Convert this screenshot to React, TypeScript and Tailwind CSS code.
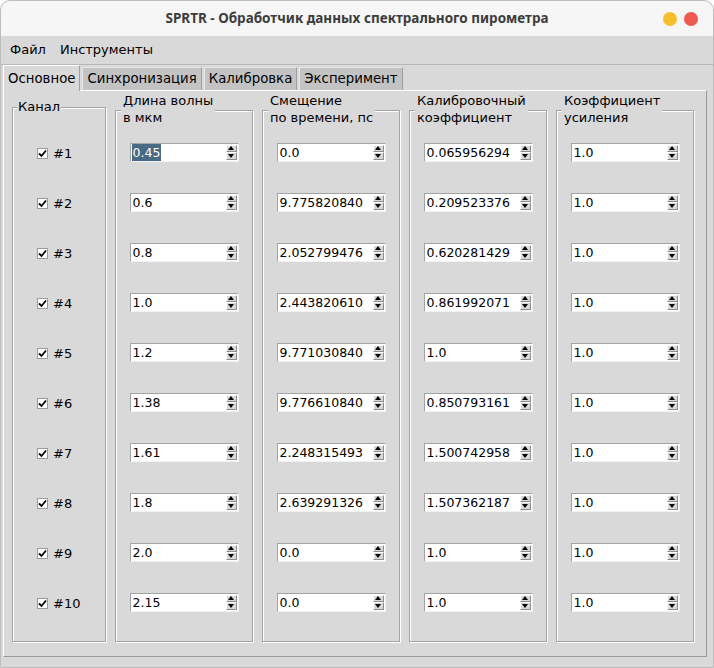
import React from 'react'

const channels = ['#1', '#2', '#3', '#4', '#5', '#6', '#7', '#8', '#9', '#10']

const columns = [
  {
    label: ['Длина волны', 'в мкм'],
    values: ['0.45', '0.6', '0.8', '1.0', '1.2', '1.38', '1.61', '1.8', '2.0', '2.15'],
  },
  {
    label: ['Смещение', 'по времени, пс'],
    values: ['0.0', '9.775820840', '2.052799476', '2.443820610', '9.771030840', '9.776610840', '2.248315493', '2.639291326', '0.0', '0.0'],
  },
  {
    label: ['Калибровочный', 'коэффициент'],
    values: ['0.065956294', '0.209523376', '0.620281429', '0.861992071', '1.0', '0.850793161', '1.500742958', '1.507362187', '1.0', '1.0'],
  },
  {
    label: ['Коэффициент', 'усиления'],
    values: ['1.0', '1.0', '1.0', '1.0', '1.0', '1.0', '1.0', '1.0', '1.0', '1.0'],
  },
]

const tabs = ['Основное', 'Синхронизация', 'Калибровка', 'Эксперимент']

const ArrowButton = ({ up }: { up?: boolean }) => (
  <div className="flex flex-1 items-center justify-center border-t border-l border-t-white border-l-white border-r border-b border-r-[#8c8c8c] border-b-[#8c8c8c] bg-[#d9d9d9]">
    <svg width="6" height="4" viewBox="0 0 6 4">
      {up ? <path d="M0 4 L3 0 L6 4 Z" fill="#000" /> : <path d="M0 0 L6 0 L3 4 Z" fill="#000" />}
    </svg>
  </div>
)

const Spinbox = ({ value, selected }: { value: string; selected?: boolean }) => (
  <div className="flex h-[19px] w-[109px] border-t border-l border-[#a3a3a3] border-r border-b border-r-[#f2f2f2] border-b-[#f2f2f2] bg-white">
    <div className="flex flex-1 items-center overflow-hidden whitespace-nowrap pl-[1px] text-[12.5px] leading-[17px] text-black">
      {selected ? <span className="bg-[#4a6984] px-[1px] text-white">{value}</span> : <span className="px-[1px]">{value}</span>}
    </div>
    <div className="flex w-[12px] flex-col py-[1px] pr-[1px]">
      <ArrowButton up />
      <ArrowButton />
    </div>
  </div>
)

const Checkbox = () => (
  <div className="flex h-[11px] w-[11px] items-center justify-center border border-[#9a9a9a] bg-white">
    <svg width="9" height="9" viewBox="0 0 9 9">
      <path d="M1 4.5 L3.5 7 L8 1.5" fill="none" stroke="#000" strokeWidth="1.8" />
    </svg>
  </div>
)

const groove = 'border border-[#a3a3a3] shadow-[inset_1px_1px_0_#fff,1px_1px_0_#fff]'

export default function App() {
  return (
    <div className="h-[668px] w-[714px] bg-white font-['DejaVu_Sans',sans-serif] text-[13px] text-black">
      <div className="flex h-full flex-col overflow-hidden rounded-t-[10px] border border-[#bdbdbd] bg-[#d9d9d9]">
        {/* title bar */}
        <div className="relative flex h-[35px] items-center justify-center bg-[#f6f6f6]">
          <span className="font-['Noto_Sans',sans-serif] text-[13.5px] font-bold text-[#3c3c3c]">
            SPRTR - Обработчик данных спектрального пирометра
          </span>
          <div className="absolute right-[15px] top-[11px] flex gap-[7px]">
            <div className="h-[14px] w-[14px] rounded-full bg-[#f4bf2a]" />
            <div className="h-[14px] w-[14px] rounded-full bg-[#ed5a52]" />
          </div>
        </div>

        {/* menu */}
        <div className="flex h-[29px] items-center gap-[14px] border-b border-[#b8b8b8] pl-[9px]">
          <span>Файл</span>
          <span>Инструменты</span>
        </div>

        {/* tabs */}
        <div className="flex h-[25px] items-end gap-[2px] pl-[2px] text-[13.3px]">
          {tabs.map((t, i) =>
            i === 0 ? (
              <div
                key={t}
                className="relative z-10 -mb-[1px] flex h-[26px] items-center border-t border-l border-white border-r border-r-[#9e9e9e] bg-[#d9d9d9] px-[4px]"
              >
                {t}
              </div>
            ) : (
              <div
                key={t}
                className="flex h-[23px] items-center border-t border-l border-[#e6e6e6] border-r border-r-[#9e9e9e] bg-[#c3c3c3] px-[4px]"
              >
                {t}
              </div>
            )
          )}
        </div>

        {/* notebook pane */}
        <div className="ml-[2px] mr-[6px] h-[567px] border-t border-l border-white border-r border-b border-r-[#9a9a9a] border-b-[#9a9a9a] pl-[8px] pt-[1px]">
          <div className="flex h-[550px] gap-[9px]">
            {/* channel */}
            <div className="relative flex w-[94px] flex-col pt-[15px]">
              <div className="absolute left-[5px] top-[6px] z-10 bg-[#d9d9d9] px-[1px] leading-[17px]">Канал</div>
              <div className={`flex-1 pt-[20px] pl-[24px] ${groove}`}>
                {channels.map((c) => (
                  <div key={c} className="flex h-[50px] items-center gap-[5px]">
                    <Checkbox />
                    <span className="leading-[17px]">{c}</span>
                  </div>
                ))}
              </div>
            </div>

            {columns.map((col) => (
              <div key={col.label[0]} className="relative flex w-[138px] flex-col pt-[18px]">
                <div className="absolute left-[6px] top-0 z-10 bg-[#d9d9d9] px-[2px] leading-[17px]">
                  <div>{col.label[0]}</div>
                  <div>{col.label[1]}</div>
                </div>
                <div className={`flex flex-1 flex-col items-center pt-[16px] ${groove}`}>
                  {col.values.map((v, i) => (
                    <div key={i} className="flex h-[50px] items-center">
                      <Spinbox value={v} selected={col.label[0] === 'Длина волны' && i === 0} />
                    </div>
                  ))}
                </div>
              </div>
            ))}
          </div>
        </div>
      </div>
    </div>
  )
}
